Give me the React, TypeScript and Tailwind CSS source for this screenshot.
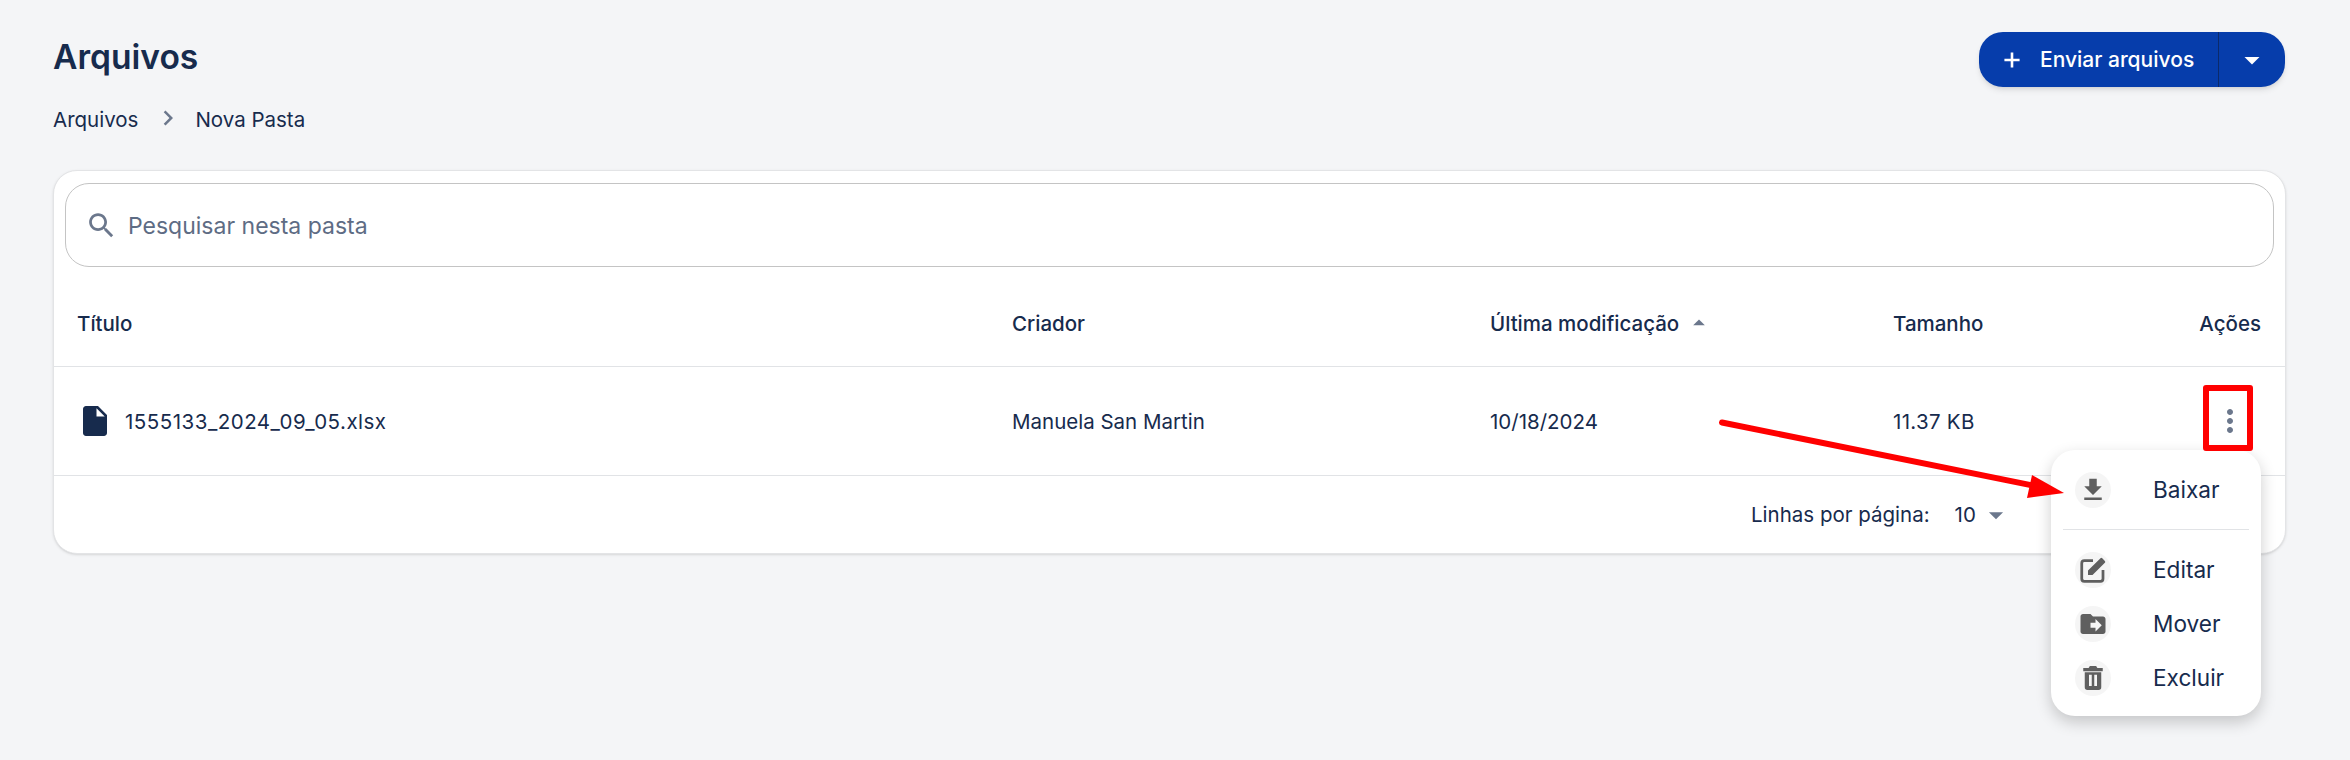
import React from 'react';

const textColor = 'text-[#172b4d]';

const Icon: React.FC<{ d: string; className?: string }> = ({ d, className }) => (
  <svg viewBox="0 0 24 24" fill="currentColor" fillRule="evenodd" className={className}>
    <path d={d} />
  </svg>
);

const paths = {
  search: 'M15.5 14h-.79l-.28-.27C15.41 12.59 16 11.11 16 9.5 16 5.91 13.09 3 9.5 3S3 5.91 3 9.5 5.91 16 9.5 16c1.61 0 3.09-.59 4.23-1.57l.27.28v.79l5 4.99L20.49 19l-4.99-5zm-6 0C7.01 14 5 11.99 5 9.5S7.01 5 9.5 5 14 7.01 14 9.5 11.99 14 9.5 14z',
  file: 'M6 2c-1.1 0-1.99.9-1.99 2L4 20c0 1.1.89 2 1.99 2H18c1.1 0 2-.9 2-2V8l-6-6H6zm7 7V3.5L18.5 9H13z',
  chevron: 'M10 6 8.59 7.41 13.17 12l-4.58 4.59L10 18l6-6z',
  plus: 'M19 13.2h-5.8V19h-2.4v-5.8H5v-2.4h5.8V5h2.4v5.8H19v2.4z',
  caret: 'M7 10l5 5 5-5z',
  caretUp: 'M7 14l5-5 5 5z',
  more: 'M12 8c1.1 0 2-.9 2-2s-.9-2-2-2-2 .9-2 2 .9 2 2 2zm0 2c-1.1 0-2 .9-2 2s.9 2 2 2 2-.9 2-2-.9-2-2-2zm0 6c-1.1 0-2 .9-2 2s.9 2 2 2 2-.9 2-2-.9-2-2-2z',
  download: 'M19 9h-4V3H9v6H5l7 7 7-7zM5 18v2h14v-2H5z',
  move: 'M20 6h-8l-2-2H4c-1.1 0-1.99.9-1.99 2L2 18c0 1.1.9 2 2 2h16c1.1 0 2-.9 2-2V8c0-1.1-.9-2-2-2zm-6 12v-3h-4v-4h4V8l5 5-5 5z',
  trash: 'M9.5 2.4h5l1 1.6h4.3v2.6H4.2V4h4.3zM5.4 7.4h13.2v12a2.2 2.2 0 0 1-2.2 2.2H7.6a2.2 2.2 0 0 1-2.2-2.2zM8.8 9.4v9h2.2v-9zM13 9.4v9h2.2v-9z',
};

const EditIcon = () => (
  <svg viewBox="0 0 24 24" className="w-[30px] h-[30px] text-[#5f5f5f]" fill="none">
    <path d="M12 4.5H5a2 2 0 0 0-2 2V19a2 2 0 0 0 2 2h13a2 2 0 0 0 2-2v-7" stroke="currentColor" strokeWidth="2.2" />
    <path d="M8 16v-3.6L18 2.6a1 1 0 0 1 1.4 0l2.1 2.1a1 1 0 0 1 0 1.4L11.6 16z" fill="currentColor" />
  </svg>
);

const MenuItem: React.FC<{ label: string; icon: React.ReactNode; className?: string }> = ({ label, icon, className }) => (
  <div className={`flex items-center h-[36px] pl-[24px] ${className ?? ''}`}>
    <span className="w-[36px] h-[36px] rounded-full bg-[#f5f5f5] flex items-center justify-center shrink-0">{icon}</span>
    <span className={`ml-[42px] text-[22.6px] ${textColor}`}>{label}</span>
  </div>
);

const menuIcon = 'w-[30px] h-[30px] text-[#5f5f5f]';

export default function App() {
  return (
    <div className="relative w-[2350px] h-[760px] overflow-hidden bg-[#f4f5f7] px-[53px] pt-[32px] pr-[64px]" style={{ fontFamily: 'Inter, sans-serif' }}>
      <div className="flex justify-between items-start h-[138px]">
        <div>
          <h1 className={`text-[33.6px] leading-[48px] pt-[1px] font-semibold ${textColor}`}>Arquivos</h1>
          <div className={`flex items-center mt-[25px] text-[20.5px] leading-[24px] ${textColor}`}>
            <span>Arquivos</span>
            <Icon d={paths.chevron} className="w-[30px] h-[30px] text-[#6b778c] ml-[15px] mr-[12px] -mt-[3px]" />
            <span>Nova Pasta</span>
          </div>
        </div>
        <div className="flex h-[55px] w-[306px] mr-[1px] rounded-[24px] bg-[#063dab] text-white shadow-md">
          <div className="flex items-center flex-1 pl-[20px]">
            <Icon d={paths.plus} className="w-[26px] h-[26px]" />
            <span className="ml-[15px] text-[21px] font-medium">Enviar arquivos</span>
          </div>
          <div className="flex items-center justify-center w-[67px] border-l border-[#0b2a6b]">
            <Icon d={paths.caret} className="w-[36px] h-[36px]" />
          </div>
        </div>
      </div>

      <div className="h-[384px] bg-white rounded-[24px] border border-[#e3e4e6] shadow-sm">
        <div className="mx-[11px] mt-[12px] h-[84px] rounded-[24px] border border-[#c4c4c4] flex items-center pl-[19px]">
          <Icon d={paths.search} className="w-[33px] h-[33px] text-[#6b778c]" />
          <span className="ml-[10px] pt-[2px] text-[23px] text-[#5e6c84]">Pesquisar nesta pasta</span>
        </div>

        <div className={`grid grid-cols-[935px_478px_403px_1fr] items-center h-[100px] pt-[16px] pl-[23px] pr-[24px] border-b border-[#e1e3e6] text-[20.5px] font-medium ${textColor}`}>
          <span>Título</span>
          <span>Criador</span>
          <span className="flex items-center">
            Última modificação
            <Icon d={paths.caretUp} className="w-[28px] h-[28px] ml-[6px] text-[#6b778c] -mt-[3px]" />
          </span>
          <span className="flex justify-between">
            Tamanho
            <span>Ações</span>
          </span>
        </div>

        <div className={`grid grid-cols-[935px_478px_403px_1fr] items-center h-[109px] pl-[23px] pr-[24px] border-b border-[#e1e3e6] text-[20.5px] ${textColor}`}>
          <span className="flex items-center">
            <Icon d={paths.file} className="w-[36px] h-[36px]" />
            <span className="ml-[12px] pt-[2px] tracking-[0.5px]">1555133_2024_09_05.xlsx</span>
          </span>
          <span className="pt-[2px]">Manuela San Martin</span>
          <span className="pt-[2px]">10/18/2024</span>
          <span className="flex justify-between items-center">
            <span className="pt-[2px] tracking-[0.3px]">11.37 KB</span>
            <Icon d={paths.more} className="w-[36px] h-[36px] text-[#6b778c] mr-[13px]" />
          </span>
        </div>

        <div className={`flex items-center h-[78px] pl-[1697px] text-[20.5px] ${textColor}`}>
          <span>Linhas por página:</span>
          <span className="ml-[25px]">10</span>
          <Icon d={paths.caret} className="w-[34px] h-[34px] text-[#6b778c] ml-[3px]" />
        </div>
      </div>

      <div className="absolute left-[2051px] top-[450px] w-[210px] h-[266px] bg-white rounded-[24px] shadow-[0_6px_16px_rgba(0,0,0,0.2)] pt-[22px]">
        <MenuItem label="Baixar" icon={<Icon d={paths.download} className={menuIcon} />} />
        <div className="mx-[12px] mt-[21px] mb-[22px] border-t border-[#e1e3e6]" />
        <MenuItem label="Editar" icon={<EditIcon />} />
        <MenuItem label="Mover" icon={<Icon d={paths.move} className={menuIcon} />} className="mt-[18px]" />
        <MenuItem label="Excluir" icon={<Icon d={paths.trash} className={menuIcon} />} className="mt-[18px]" />
      </div>

      <div className="absolute left-[2203px] top-[385px] w-[50px] h-[66px] border-[6px] border-[#ff0000] rounded-[3px]" />

      <svg className="absolute left-0 top-0 pointer-events-none" width="2350" height="760" fill="none">
        <line x1="1722" y1="422.5" x2="2040" y2="487" stroke="#ff0000" strokeWidth="6" strokeLinecap="round" />
        <polygon points="2064,493 2032,475 2027,498" fill="#ff0000" />
      </svg>
    </div>
  );
}
